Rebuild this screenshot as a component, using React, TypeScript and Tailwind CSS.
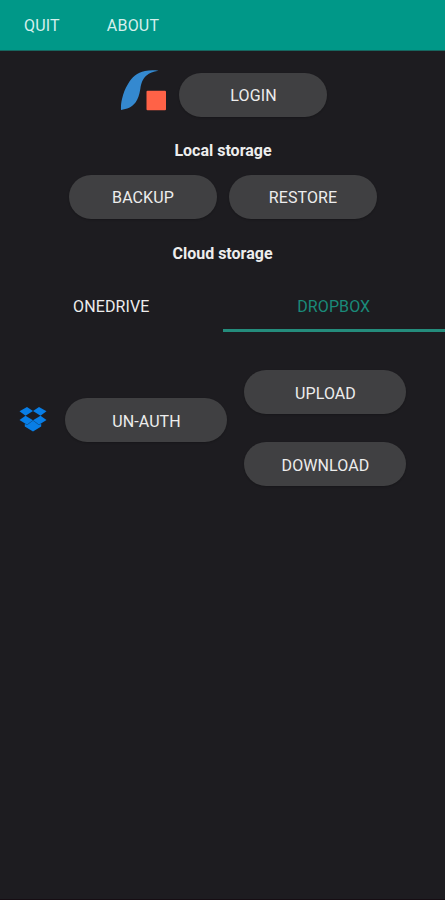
import { useState } from "react"
import clsx from "clsx"

type Tab = "OneDrive" | "Dropbox"

const TABS: Tab[] = ["OneDrive", "Dropbox"]

function PillButton({ label, wide }: { label: string; wide?: boolean }) {
  return (
    <button
      type="button"
      className={clsx(
        "h-[44px] shrink-0 rounded-full pl-px uppercase tracking-[0.1px] bg-[#404042] text-[#ededed] shadow-[0_1px_2px_rgba(0,0,0,0.2)]",
        wide ? "w-[162px] pt-[3px]" : "w-[148px] pt-[2px]"
      )}
    >
      {label}
    </button>
  )
}

function AppLogo() {
  return (
    <svg className="-my-[3px] h-[50px] w-[50px]" viewBox="0 -3 50 50">
      <path
        d="M1 36.900C0.800 33 1.200 29 2 26C3.500 20 5 15.500 8 11C12 4 17 0 25 -1.900C29 -2.800 34 -2.900 38.500 -2.200C33 -1.600 29.500 0 26.500 2.500C22.500 6 21.300 10 20.300 16C19.300 22 18 26 15.500 29.500C12 34 7 36.300 1 36.900Z"
        fill="#3489d0"
      />
      <rect x="26.500" y="17.700" width="19.500" height="19.500" rx="1" fill="#ff6247" />
    </svg>
  )
}

function DropboxIcon() {
  return (
    <svg className="h-[25px] w-[28px]" viewBox="0 0 28 25" fill="#087ee6">
      <path d="M8 0L14 4L6.500 8.700L0.500 4.300Z" />
      <path d="M20 0L27.500 4.300L21.500 8.700L14 4Z" />
      <path d="M6.500 8.700L14 13.300L8 17.800L0.500 13.100Z" />
      <path d="M21.500 8.700L27.500 13.100L20 17.800L14 13.300Z" />
      <path d="M14 13.600L20 18.100L22.200 16.800V19.500L14 24.500L5.800 19.500V16.800L8 18.100Z" />
      <path d="M6.500 17L8 17.900L14 13.400L20 17.900L21.500 17" fill="none" stroke="#0864b5" strokeWidth="0.600" />
    </svg>
  )
}

export default function App() {
  const [active, setActive] = useState<Tab>("Dropbox")

  return (
    <div className="flex h-[900px] w-[445px] flex-col overflow-hidden border-b border-[#160d13] bg-[#1d1c20] font-['Roboto','Liberation_Sans',sans-serif] text-[16px] leading-5 text-[#ededed]">
      <header className="flex h-[51px] shrink-0 items-center gap-[47px] border-b border-[#17665f] bg-[#009888] pl-[24px] text-[#d5efec]">
        <button type="button" className="pt-px uppercase tracking-[0.2px]">Quit</button>
        <button type="button" className="pt-px uppercase tracking-[0.2px]">About</button>
      </header>

      <main className="flex flex-col">
        <div className="mt-[22px] flex items-center pl-[120px]">
          <div className="w-[59px]">
            <AppLogo />
          </div>
          <PillButton label="Login" />
        </div>

        <h2 className="mt-[24px] pl-px text-center font-bold">Local storage</h2>
        <div className="mt-[14px] flex justify-center gap-3">
          <PillButton label="Backup" />
          <PillButton label="Restore" />
        </div>

        <h2 className="mt-[25px] text-center font-bold">Cloud storage</h2>
        <div className="mt-[17px] grid h-[51px] grid-cols-2">
          {TABS.map((tab) => (
            <button
              key={tab}
              type="button"
              onClick={() => setActive(tab)}
              className={clsx(
                "border-b-[3px] pt-[3px] uppercase tracking-[0.1px]",
                tab === active ? "border-[#248c7c] text-[#1a8a79]" : "border-transparent"
              )}
            >
              {tab}
            </button>
          ))}
        </div>

        <div className="mt-[38px] flex items-center pl-[19px]">
          <div className="mb-[17px]">
            <DropboxIcon />
          </div>
          <div className="ml-[18px] mr-[17px] mb-[16px]">
            <PillButton label="Un-auth" wide />
          </div>
          <div className="flex flex-col gap-[28px]">
            <PillButton label="Upload" wide />
            <PillButton label="Download" wide />
          </div>
        </div>
      </main>
    </div>
  )
}
